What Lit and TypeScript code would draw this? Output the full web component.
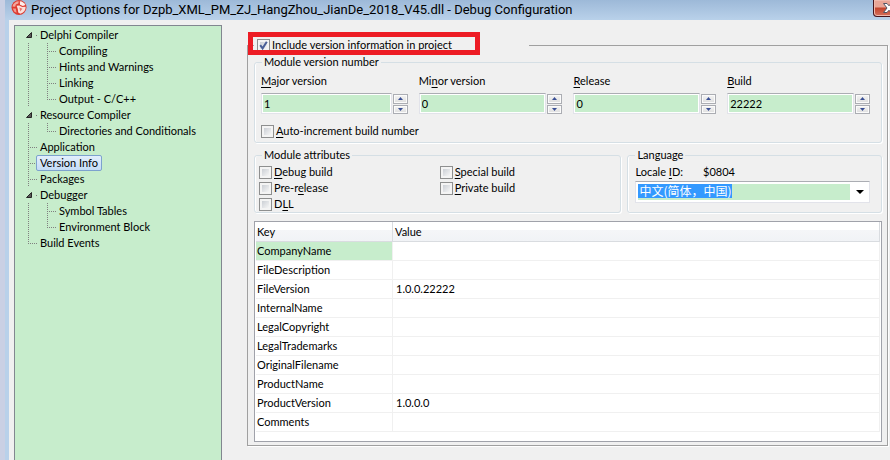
import { LitElement, html, css, svg } from "lit";
import { customElement, property } from "lit/decorators.js";

type Guide = "pass" | "tee" | "elbow" | "open";

interface TreeRow {
  guides: Guide[];
  label: string;
  selected?: boolean;
}

const TREE: TreeRow[] = [
  { guides: ["open"], label: "Delphi Compiler" },
  { guides: ["pass", "tee"], label: "Compiling" },
  { guides: ["pass", "tee"], label: "Hints and Warnings" },
  { guides: ["pass", "tee"], label: "Linking" },
  { guides: ["pass", "elbow"], label: "Output - C/C++" },
  { guides: ["open"], label: "Resource Compiler" },
  { guides: ["pass", "elbow"], label: "Directories and Conditionals" },
  { guides: ["tee"], label: "Application" },
  { guides: ["tee"], label: "Version Info", selected: true },
  { guides: ["tee"], label: "Packages" },
  { guides: ["open"], label: "Debugger" },
  { guides: ["pass", "tee"], label: "Symbol Tables" },
  { guides: ["pass", "elbow"], label: "Environment Block" },
  { guides: ["elbow"], label: "Build Events" },
];

const INFO: [string, string][] = [
  ["CompanyName", ""],
  ["FileDescription", ""],
  ["FileVersion", "1.0.0.22222"],
  ["InternalName", ""],
  ["LegalCopyright", ""],
  ["LegalTrademarks", ""],
  ["OriginalFilename", ""],
  ["ProductName", ""],
  ["ProductVersion", "1.0.0.0"],
  ["Comments", ""],
];

/** Renders a caption in which the letter after "&" is the underlined access key. */
const caption = (text: string) => {
  const i = text.indexOf("&");
  if (i < 0) return html`${text}`;
  return html`${text.slice(0, i)}<u>${text[i + 1]}</u>${text.slice(i + 2)}`;
};

const shared = css`
  * {
    box-sizing: border-box;
  }
  u {
    text-decoration: underline;
    text-underline-offset: 2px;
    text-decoration-skip-ink: none;
  }
`;

@customElement("option-tree")
export class OptionTree extends LitElement {
  static styles = [
    shared,
    css`
      :host {
        display: block;
        background: #c7edcc;
        border: 1px solid #828790;
        border-bottom: 0;
        padding: 1px 4px;
      }
      ul {
        list-style: none;
        margin: 0;
        padding: 0;
      }
      li {
        display: flex;
        height: 16px;
      }
      .guide {
        flex: none;
        width: 19px;
        height: 16px;
        background-repeat: no-repeat;
        --down: repeating-linear-gradient(#808080 0 1px, transparent 1px 2px);
        --across: repeating-linear-gradient(90deg, #808080 0 1px, transparent 1px 2px);
      }
      .pass {
        background-image: var(--down);
        background-size: 1px 16px;
        background-position: 9px 0;
      }
      .tee {
        background-image: var(--down), var(--across);
        background-size: 1px 16px, 9px 1px;
        background-position: 9px 0, 9px 8px;
      }
      .elbow {
        background-image: var(--down), var(--across);
        background-size: 1px 8px, 9px 1px;
        background-position: 9px 0, 9px 8px;
      }
      .open svg {
        display: block;
      }
      a {
        display: block;
        height: 16px;
        margin-left: -2px;
        padding: 0 3px;
        border: 1px solid transparent;
        border-radius: 2px;
        line-height: 14px;
        color: #000;
        text-decoration: none;
        white-space: nowrap;
      }
      .selected {
        border-color: #7da2ce;
        background: linear-gradient(#e3effc, #c5dcf6);
      }
    `,
  ];

  render() {
    return html`<nav aria-label="Option pages">
      <ul>
        ${TREE.map(
          (row) => html`<li>
            ${row.guides.map(
              (g) => html`<span class="guide ${g}"
                >${g === "open"
                  ? html`<svg width="19" height="16" viewBox="0 0 19 16" aria-hidden="true">
                      <path d="M7.5 10.5H12.5V5.5Z" fill="#595959" stroke="#262626" />
                      <rect x="17" y="8" width="1" height="1" fill="#808080" />
                    </svg>`
                  : ""}</span
              >`
            )}
            <a href="#" class=${row.selected ? "selected" : ""}>${row.label}</a>
          </li>`
        )}
      </ul>
    </nav>`;
  }
}

@customElement("check-option")
export class CheckOption extends LitElement {
  @property() label = "";
  @property({ type: Boolean }) checked = false;

  static styles = [
    shared,
    css`
      :host {
        display: block;
      }
      label {
        display: flex;
        align-items: center;
        gap: 2px;
        height: 16px;
        line-height: 16px;
        white-space: nowrap;
      }
      input {
        appearance: none;
        flex: none;
        width: 13px;
        height: 13px;
        margin: 0;
        border: 1px solid #8e8f8f;
        background: linear-gradient(135deg, #cbcfd5, #f6f6f6) content-box, #f4f4f4;
        padding: 2px;
      }
      .box {
        display: grid;
      }
      .box > * {
        grid-area: 1 / 1;
      }
      svg {
        pointer-events: none;
      }
    `,
  ];

  render() {
    return html`<label>
      <span class="box">
        <input type="checkbox" .checked=${this.checked} />
        ${this.checked
          ? html`<svg width="13" height="13" viewBox="0 0 13 13" aria-hidden="true">
              <path d="M3.2 6.2L5.6 9.4L9.8 2.8" fill="none" stroke="#4a5f97" stroke-width="2" />
            </svg>`
          : ""}
      </span>
      <span>${caption(this.label)}</span>
    </label>`;
  }
}

@customElement("spin-field")
export class SpinField extends LitElement {
  @property() label = "";
  @property() value = "";

  static styles = [
    shared,
    css`
      :host {
        display: block;
      }
      label {
        display: block;
        height: 16px;
        line-height: 16px;
        margin-bottom: 4px;
      }
      .row {
        display: flex;
        gap: 1px;
        height: 21px;
      }
      input {
        flex: 1;
        min-width: 0;
        font: inherit;
        color: #000;
        border: 1px solid #e2e3ea;
        border-top-color: #abadb3;
        background: #c7edcc;
        box-shadow: inset 0 0 0 1px #fff;
        padding: 0 2px;
        outline: 0;
      }
      .spin {
        display: grid;
        grid-template-rows: 1fr 1fr;
        gap: 1px;
        width: 15px;
        padding-top: 1px;
      }
      button {
        display: grid;
        place-items: center;
        padding: 0;
        border: 1px solid #abadb3;
        background: linear-gradient(#f4f4f4, #dedede);
        box-shadow: inset 0 0 0 1px #fbfbfb;
      }
      svg {
        display: block;
      }
    `,
  ];

  render() {
    return html`<label for="field">${caption(this.label)}</label>
      <div class="row">
        <input id="field" type="text" .value=${this.value} />
        <span class="spin">
          <button type="button" aria-label="Increase">
            <svg width="5" height="3" viewBox="0 0 5 3"><path d="M0 3L2.5 0L5 3Z" fill="#3a4f94" /></svg>
          </button>
          <button type="button" aria-label="Decrease">
            <svg width="5" height="3" viewBox="0 0 5 3"><path d="M0 0L2.5 3L5 0Z" fill="#3a4f94" /></svg>
          </button>
        </span>
      </div>`;
  }
}

const appIcon = svg`
  <circle cx="8" cy="7.5" r="7.5" fill="#dd3a30" />
  <path d="M1.4 6.6C2.2 3.2 4.8 1.2 7.8 1.2L7.4 3.4L4.8 4.4L4.2 6.8Z" fill="#f3a79e" />
  <path d="M8.8 1.2C11.4 1.4 13.4 2.8 14.4 5L11.8 6L9 4.8Z" fill="#fdeeea" />
  <path d="M5.6 5.8L8.2 5.4L11.2 7L14.6 6.8C14.8 10.2 12.6 13 9.4 13.8L7.2 12.4L6.8 9Z" fill="#fbe0db" />
  <path d="M8.4 7.6L11.4 8.8L9.2 11.6Z" fill="#e8766c" />
  <path d="M1.8 8.6L4.8 8.4L5.6 12.8L3.4 11.8Z" fill="#f29a90" />
`;

@customElement("app-root")
export class AppRoot extends LitElement {
  static styles = [
    shared,
    css`
      :host {
        display: grid;
        grid-template-columns: 5px 1fr;
        min-height: 100vh;
        overflow: hidden;
        background: #cad0e4;
        font: 11px Lato, "Noto Sans CJK SC", sans-serif;
        color: #000;
      }
      .window {
        min-width: 0;
        display: flex;
        flex-direction: column;
        background: #b9d1ea;
        padding-left: 4px;
      }
      .titlebar {
        display: flex;
        align-items: flex-start;
        gap: 4px;
        height: 20px;
        margin-left: -4px;
        padding-left: 6px;
        background: linear-gradient(#9db9d8, #b9d1ea);
      }
      .titlebar svg {
        display: block;
      }
      h1 {
        flex: 1;
        margin: 0;
        font-family: Roboto, sans-serif;
        font-size: 13px;
        font-weight: 400;
        line-height: 19px;
        white-space: nowrap;
      }
      .close {
        width: 32px;
        height: 17px;
        margin-right: -15px;
        padding: 0 0 0 9px;
        border: 1px solid #45141c;
        border-top: 0;
        border-radius: 0 0 4px 4px;
        background: linear-gradient(#e9a596 0 7px, #c4442c 8px, #d4705c);
        box-shadow: inset 0 0 0 1px #f0b8ac;
      }
      .body {
        flex: 1;
        display: grid;
        grid-template-columns: 208px minmax(0, 1fr);
        gap: 25px;
        background: #f0f0f0;
        padding: 5px 2px 0 5px;
      }
      fieldset {
        min-width: 0;
        margin: 0;
        padding: 0;
      }
      legend {
        height: 16px;
        padding: 0 2px;
        line-height: 16px;
      }
      .page {
        align-self: start;
        margin-top: 12px;
        padding: 1px 5px 3px 6px;
        border: 1px solid #a0a0a0;
        box-shadow: 1px 1px #fff;
      }
      .main-legend {
        position: relative;
        width: 275px;
        padding: 0 3px;
      }
      .mark {
        position: absolute;
        top: -5px;
        left: -6px;
        width: 232px;
        height: 23px;
        border: 5px solid #ed1c24;
        pointer-events: none;
      }
      .group {
        border: 1px solid #d5dfe5;
        border-radius: 3px;
        box-shadow: 1px 1px #fff, inset 1px 0 #fff;
      }
      .group legend {
        margin-left: 7px;
      }
      .content {
        padding: 3px 0 3px 6px;
      }
      .fields {
        display: grid;
        grid-template-columns: minmax(0, 158fr) minmax(0, 155fr) minmax(0, 154fr) minmax(0, 154fr);
        margin-bottom: 9px;
      }
      .fields spin-field {
        margin-right: 11px;
      }
      .pair {
        display: grid;
        grid-template-columns: minmax(0, 368fr) minmax(0, 255fr);
        gap: 6px;
        margin: 4px 0 8px;
      }
      .attributes {
        display: grid;
        grid-template-columns: 1fr 1fr;
        padding: 1px 0 0 4px;
      }
      .language {
        padding: 1px 11px 0 7px;
      }
      .locale {
        display: flex;
        gap: 20px;
        height: 16px;
        line-height: 16px;
        margin-bottom: 1px;
      }
      .combo {
        display: grid;
        border: 1px solid #e2e3ea;
        border-top-color: #abadb3;
        background: #fff;
        padding: 2px;
      }
      .combo > * {
        grid-area: 1 / 1;
      }
      select {
        appearance: none;
        width: 100%;
        height: 16px;
        margin: 0;
        padding: 0 0 2px 1px;
        border: 0;
        border-right: 17px solid #fff;
        border-radius: 0;
        outline: 0;
        font: 12px/14px "Noto Sans CJK SC", sans-serif;
        color: #fff;
        background: linear-gradient(#39f, #39f) 0 0 / 94px 14px no-repeat #c7edcc;
      }
      .arrow {
        justify-self: end;
        align-self: center;
        margin-right: 3px;
        pointer-events: none;
      }
      .grid {
        border: 1px solid #a0a2aa;
        background: #fff;
        padding: 0 1px 9px;
      }
      table {
        width: 100%;
        border-collapse: separate;
        border-spacing: 0;
        table-layout: fixed;
      }
      .key {
        width: 137px;
      }
      th,
      td {
        padding: 0 0 0 1px;
        font-weight: 400;
        text-align: left;
        border-right: 1px solid #f0f0f0;
        border-bottom: 1px solid #f0f0f0;
        height: 19px;
        line-height: 18px;
      }
      td {
        padding-left: 3px;
      }
      tbody th {
        padding-left: 1px;
      }
      thead th {
        height: 20px;
        line-height: 19px;
        border-color: #d9dce0;
        background: linear-gradient(#fff 0 8px, #f5f6f8 8px, #f1f3f6);
      }
      thead th + th {
        padding-left: 2px;
      }
      tbody .current {
        background: #c7edcc;
      }
    `,
  ];

  render() {
    return html`<span></span>
      <main class="window">
        <header class="titlebar">
          <svg width="16" height="16" viewBox="0 0 16 16" aria-hidden="true">${appIcon}</svg>
          <h1>Project Options for Dzpb_XML_PM_ZJ_HangZhou_JianDe_2018_V45.dll - Debug Configuration</h1>
          <button class="close" type="button" aria-label="Close">
            <svg width="12" height="10" viewBox="0 0 12 10">
              <path
                d="M0.5 0.5H4L6 2.8L8 0.5H11.5L8 5L11.5 9.5H8L6 7.2L4 9.5H0.5L4 5Z"
                fill="#fff"
                stroke="#535666"
              />
            </svg>
          </button>
        </header>
        <div class="body">
          <option-tree></option-tree>
          <fieldset class="page">
            <legend class="main-legend">
              <check-option label="Include version information in project" checked></check-option>
              <span class="mark"></span>
            </legend>
            <fieldset class="group">
              <legend>Module version number</legend>
              <div class="content">
                <div class="fields">
                  <spin-field label="&amp;Major version" value="1"></spin-field>
                  <spin-field label="Mi&amp;nor version" value="0"></spin-field>
                  <spin-field label="&amp;Release" value="0"></spin-field>
                  <spin-field label="&amp;Build" value="22222"></spin-field>
                </div>
                <check-option label="&amp;Auto-increment build number"></check-option>
              </div>
            </fieldset>
            <div class="pair">
              <fieldset class="group">
                <legend>Module attributes</legend>
                <div class="attributes">
                  <check-option label="&amp;Debug build"></check-option>
                  <check-option label="&amp;Special build"></check-option>
                  <check-option label="Pre-r&amp;elease"></check-option>
                  <check-option label="&amp;Private build"></check-option>
                  <check-option label="D&amp;LL"></check-option>
                </div>
              </fieldset>
              <fieldset class="group">
                <legend>Language</legend>
                <div class="language">
                  <div class="locale">
                    <label for="locale">${caption("Locale &ID:")}</label>
                    <span>$0804</span>
                  </div>
                  <div class="combo">
                    <select id="locale">
                      <option>中文(简体，中国)</option>
                    </select>
                    <svg class="arrow" width="8" height="4" viewBox="0 0 8 4" aria-hidden="true">
                      <path d="M0 0H8L4 4Z" />
                    </svg>
                  </div>
                </div>
              </fieldset>
            </div>
            <div class="grid">
              <table>
                <thead>
                  <tr>
                    <th class="key" scope="col">Key</th>
                    <th scope="col">Value</th>
                  </tr>
                </thead>
                <tbody>
                  ${INFO.map(
                    ([key, value], i) => html`<tr>
                      <th scope="row" class=${i === 0 ? "current" : ""}>${key}</th>
                      <td>${value}</td>
                    </tr>`
                  )}
                </tbody>
              </table>
            </div>
          </fieldset>
        </div>
      </main>`;
  }
}
